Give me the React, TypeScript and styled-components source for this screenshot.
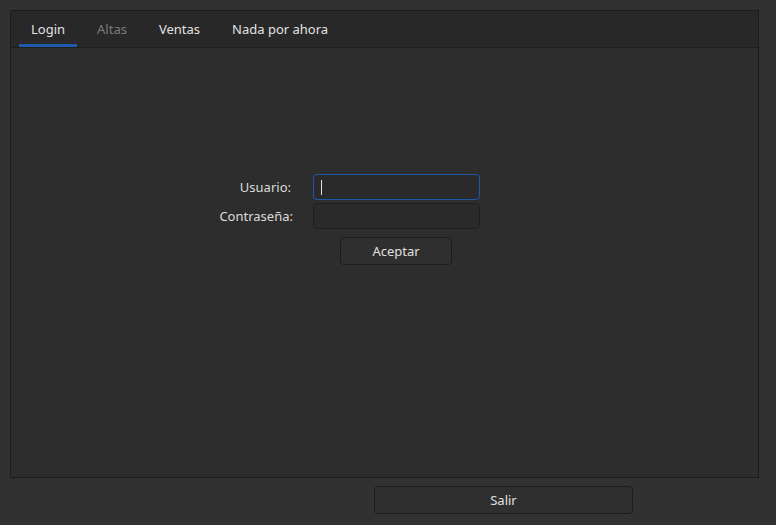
import React from "react";
import styled, { createGlobalStyle } from "styled-components";

const Global = createGlobalStyle`
  html, body { margin: 0; padding: 0; background: #313131; }
  body { font-family: "Noto Sans", "Open Sans", sans-serif; font-size: 13px; color: #dedede; }
`;

const Window = styled.div`
  width: 776px;
  height: 525px;
  box-sizing: border-box;
  padding: 10px 17px 11px 10px;
  display: flex;
  flex-direction: column;
  gap: 8px;
  background: #313131;
`;

const TabWidget = styled.div`
  flex: 1;
  display: flex;
  flex-direction: column;
  border: 1px solid #1c1c1c;
  background: #2d2d2d;
`;

const TabBar = styled.div`
  height: 36px;
  display: flex;
  gap: 8px;
  padding-left: 8px;
  background: #282828;
  border-bottom: 1px solid #1e1e1e;
`;

const Tab = styled.div<{ $active?: boolean; $disabled?: boolean }>`
  padding: 2px 12px 0;
  display: flex;
  align-items: center;
  box-sizing: border-box;
  border-bottom: 3px solid ${(p) => (p.$active ? "#1d5aa8" : "transparent")};
  color: ${(p) => (p.$disabled ? "#7b7b7b" : "#e2e2e2")};
`;

const Content = styled.div`
  flex: 1;
  padding-top: 126px;
  padding-left: 200px;
`;

const Form = styled.div`
  display: grid;
  grid-template-columns: 82px 167px;
  column-gap: 20px;
  row-gap: 3px;
  align-items: center;
`;

const Label = styled.div<{ $shift?: number }>`
  text-align: right;
  padding-right: ${(p) => p.$shift ?? 0}px;
  color: #dcdcdc;
`;

const Field = styled.div<{ $focus?: boolean }>`
  height: 26px;
  box-sizing: border-box;
  border-radius: 4px;
  border: 1px solid ${(p) => (p.$focus ? "#1c57a8" : "#1f1f1f")};
  background: #2a2a2a;
  display: flex;
  align-items: center;
  padding-left: 7px;
`;

const Caret = styled.span`
  width: 1px;
  height: 15px;
  background: #e0e0e0;
`;

const Button = styled.div`
  height: 28px;
  box-sizing: border-box;
  border: 1px solid #1c1c1c;
  border-radius: 4px;
  background: #2f2f2f;
  display: flex;
  align-items: center;
  justify-content: center;
  color: #e0e0e0;
`;

const AcceptButton = styled(Button)`
  grid-column: 2;
  width: 112px;
  margin-left: 27px;
  margin-top: 5px;
`;

const BottomRow = styled.div`
  display: grid;
  grid-template-columns: 364px 259px 1fr;
  height: 28px;
`;

const SalirButton = styled(Button)`
  grid-column: 2;
`;

export default function App() {
  return (
    <>
      <Global />
      <Window>
        <TabWidget>
          <TabBar>
            <Tab $active>Login</Tab>
            <Tab $disabled>Altas</Tab>
            <Tab>Ventas</Tab>
            <Tab>Nada por ahora</Tab>
          </TabBar>
          <Content>
            <Form>
              <Label $shift={2}>Usuario:</Label>
              <Field $focus>
                <Caret />
              </Field>
              <Label>Contraseña:</Label>
              <Field />
              <AcceptButton>Aceptar</AcceptButton>
            </Form>
          </Content>
        </TabWidget>
        <BottomRow>
          <SalirButton>Salir</SalirButton>
        </BottomRow>
      </Window>
    </>
  );
}
